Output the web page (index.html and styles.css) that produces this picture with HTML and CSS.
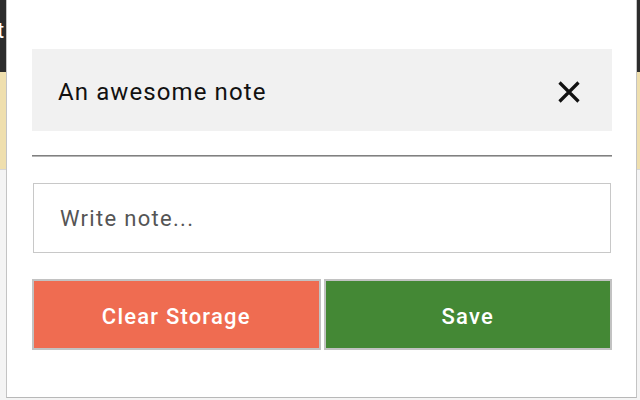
FILE: index.html
```html
<!DOCTYPE html>
<html>
<head>
<meta charset="utf-8">
<link rel="stylesheet" href="styles.css">
</head>
<body>
<div class="page">
  <div class="topbar"><span class="topbar-text">t</span></div>
  <div class="notice"></div>
  <div class="rest"></div>
</div>
<div class="popup">
  <div class="note-header">
    <span class="note-title">An awesome note</span>
    <svg class="close-icon" width="24" height="22" viewBox="0 0 24 22" aria-hidden="true">
      <path d="M2.5 1.5 L21.5 20.5 M21.5 1.5 L2.5 20.5" stroke="#111" stroke-width="3.2" fill="none"/>
    </svg>
  </div>
  <div class="divider"></div>
  <div class="note-input">Write note...</div>
  <div class="actions">
    <div class="btn btn-clear">Clear Storage</div>
    <div class="btn btn-save">Save</div>
  </div>
</div>
</body>
</html>
```
FILE: styles.css
```css
html, body {
  margin: 0;
  padding: 0;
  width: 640px;
  height: 400px;
  overflow: hidden;
  font-family: Roboto, "Liberation Sans", sans-serif;
  background: #ffffff;
}
.page {
  display: flex;
  flex-direction: column;
  width: 640px;
  height: 400px;
}
.topbar {
  height: 72px;
  background: #2c2c2c;
  color: #ffffff;
  flex: none;
}
.topbar-text {
  display: block;
  font-size: 22px;
  line-height: 22px;
  padding-top: 20px;
  margin-left: -3px;
}
.notice {
  height: 97px;
  background: #efdfae;
  border-bottom: 1px solid #d6d6d6;
  flex: none;
}
.rest {
  flex: 1;
  background: #f4f4f4;
}
.popup {
  position: absolute;
  left: 6px;
  top: 0;
  width: 580px;
  height: 348px;
  background: #ffffff;
  border-left: 1px solid #c4c4c4;
  border-right: 1px solid #c4c4c4;
  border-bottom: 1px solid #b8b8b8;
  padding: 49px 24px 0 25px;
  display: flex;
  flex-direction: column;
}
.note-header {
  height: 82px;
  background: #f1f1f1;
  display: flex;
  align-items: center;
  justify-content: space-between;
  padding: 0 31px 0 26px;
  flex: none;
}
.note-title {
  font-size: 24px;
  color: #111111;
  letter-spacing: 1.1px;
  margin-top: 4px;
}
.close-icon {
  display: block;
  margin-top: 3px;
}
.divider {
  margin-top: 24px;
  height: 1px;
  background: #808080;
  border-bottom: 1px solid #b5b5b5;
  flex: none;
}
.note-input {
  margin: 26px 1px 0 1px;
  height: 68px;
  border: 1px solid #c8c8c8;
  display: flex;
  align-items: center;
  padding-left: 26px;
  font-size: 22px;
  letter-spacing: 1.3px;
  color: #555555;
  flex: none;
}
.actions {
  margin-top: 26px;
  display: flex;
  gap: 3px;
  flex: none;
}
.btn {
  flex: 1;
  height: 67px;
  border: 2px solid #c2c2c2;
  display: flex;
  align-items: center;
  justify-content: center;
  padding-top: 3px;
  box-sizing: border-box;
  height: 71px;
  color: #ffffff;
  font-size: 22px;
  letter-spacing: 1.2px;
  font-weight: 500;
}
.btn-clear {
  background: #ef6c51;
}
.btn-save {
  background: #448835;
}
```
